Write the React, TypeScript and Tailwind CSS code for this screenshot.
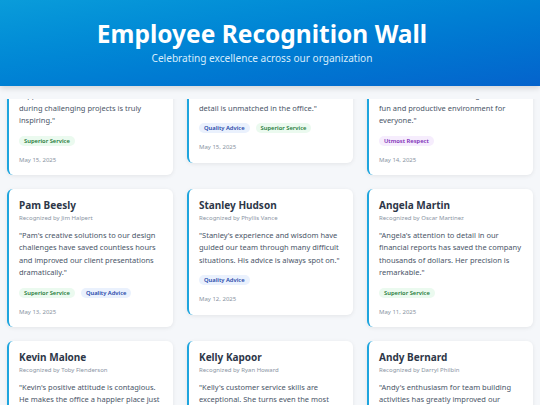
import React from "react";

type Tag = "Superior Service" | "Quality Advice" | "Utmost Respect";

interface Rec {
  name: string;
  by: string;
  quote?: string;
  lines?: string[];
  tags: Tag[];
  date: string;
}

const recs: Rec[] = [
  {
    name: "Michael Scott",
    by: "Dwight Schrute",
    lines: [
      "\"Michael's leadership and unwavering",
      "support for the entire sales team",
      "during challenging projects is truly",
      "inspiring.\"",
    ],
    tags: ["Superior Service"],
    date: "May 15, 2025",
  },
  {
    name: "Dwight Schrute",
    by: "Angela Martin",
    lines: [
      "\"Dwight's dedication to the company",
      "and his meticulous attention to",
      "detail is unmatched in the office.\"",
    ],
    tags: ["Quality Advice", "Superior Service"],
    date: "May 15, 2025",
  },
  {
    name: "Jim Halpert",
    by: "Pam Beesly",
    lines: [
      "\"Jim's ability to keep the team",
      "motivated while maintaining a",
      "fun and productive environment for",
      "everyone.\"",
    ],
    tags: ["Utmost Respect"],
    date: "May 14, 2025",
  },
  {
    name: "Pam Beesly",
    by: "Jim Halpert",
    quote:
      "Pam's creative solutions to our design challenges have saved countless hours and improved our client presentations dramatically.",
    tags: ["Superior Service", "Quality Advice"],
    date: "May 13, 2025",
  },
  {
    name: "Stanley Hudson",
    by: "Phyllis Vance",
    quote:
      "Stanley's experience and wisdom have guided our team through many difficult situations. His advice is always spot on.",
    tags: ["Quality Advice"],
    date: "May 12, 2025",
  },
  {
    name: "Angela Martin",
    by: "Oscar Martinez",
    quote:
      "Angela's attention to detail in our financial reports has saved the company thousands of dollars. Her precision is remarkable.",
    tags: ["Superior Service"],
    date: "May 11, 2025",
  },
  {
    name: "Kevin Malone",
    by: "Toby Flenderson",
    quote:
      "Kevin's positive attitude is contagious. He makes the office a happier place just by being there every day.",
    tags: ["Utmost Respect"],
    date: "May 10, 2025",
  },
  {
    name: "Kelly Kapoor",
    by: "Ryan Howard",
    quote:
      "Kelly's customer service skills are exceptional. She turns even the most difficult calls into happy customers.",
    tags: ["Superior Service"],
    date: "May 9, 2025",
  },
  {
    name: "Andy Bernard",
    by: "Darryl Philbin",
    quote:
      "Andy's enthusiasm for team building activities has greatly improved our department's morale.",
    tags: ["Utmost Respect"],
    date: "May 8, 2025",
  },
];

function TagPill({ tag }: { tag: Tag }) {
  if (tag === "Superior Service") {
    return (
      <span className="rounded-full bg-[#ebfaef] px-[5px] text-[5.8px] font-semibold leading-[10px] text-[#1f7a3a]">
        {tag}
      </span>
    );
  }
  if (tag === "Quality Advice") {
    return (
      <span className="rounded-full bg-[#eaf1fd] px-[5px] text-[5.8px] font-semibold leading-[10px] text-[#2446a8]">
        {tag}
      </span>
    );
  }
  return (
    <span className="rounded-full bg-[#f6edfd] px-[5px] text-[5.8px] font-semibold leading-[10px] text-[#7b2bb5]">
      {tag}
    </span>
  );
}

function Card({ r }: { r: Rec }) {
  return (
    <div className="rounded-[6px] border-l-2 border-[#1fa5de] bg-white px-[10px] pt-[10px] pb-[9.5px] shadow-[0_1px_4px_rgba(0,0,0,0.08)]">
      <div className="text-[10px] font-bold leading-[13px] text-[#2d3748]">{r.name}</div>
      <div className="mt-[1px] text-[6px] leading-[11px] text-[#8a94a3]">Recognized by {r.by}</div>
      <p className="mt-[5.2px] text-[7.5px] leading-[12.2px] text-[#4a5568]">
        {r.lines
          ? r.lines.map((l, i) => (
              <React.Fragment key={i}>
                {l}
                {i < r.lines!.length - 1 && <br />}
              </React.Fragment>
            ))
          : `"${r.quote}"`}
      </p>
      <div className="mt-[9.5px] flex gap-[6px]">
        {r.tags.map((t) => (
          <TagPill key={t} tag={t} />
        ))}
      </div>
      <div className="mt-[9px] text-[6px] leading-[11px] text-[#8a94a3]">{r.date}</div>
    </div>
  );
}

export default function App() {
  return (
    <div className="flex h-[405px] flex-col overflow-hidden bg-[#f5f7fa] font-['Noto_Sans',sans-serif]">
      <header className="relative z-10 flex h-[86px] shrink-0 flex-col items-center bg-linear-to-br from-[#0a9cda] to-[#0563cc] pr-[16px] shadow-[0_2px_6px_rgba(0,0,0,0.15)]">
        <h1 className="mt-[18px] text-[24.5px] font-bold leading-[32px] text-white">Employee Recognition Wall</h1>
        <p className="mt-[2px] text-[10.1px] leading-[13px] text-[#d6ecfb]">Celebrating excellence across our organization</p>
      </header>
      <div className="mt-[13px] min-h-0 flex-1 overflow-hidden">
        <main className="-mt-[62px] grid grid-cols-3 items-start gap-[14px] px-[7px] pb-[20px]">
          {recs.map((r) => (
            <Card key={r.name} r={r} />
          ))}
        </main>
      </div>
    </div>
  );
}
